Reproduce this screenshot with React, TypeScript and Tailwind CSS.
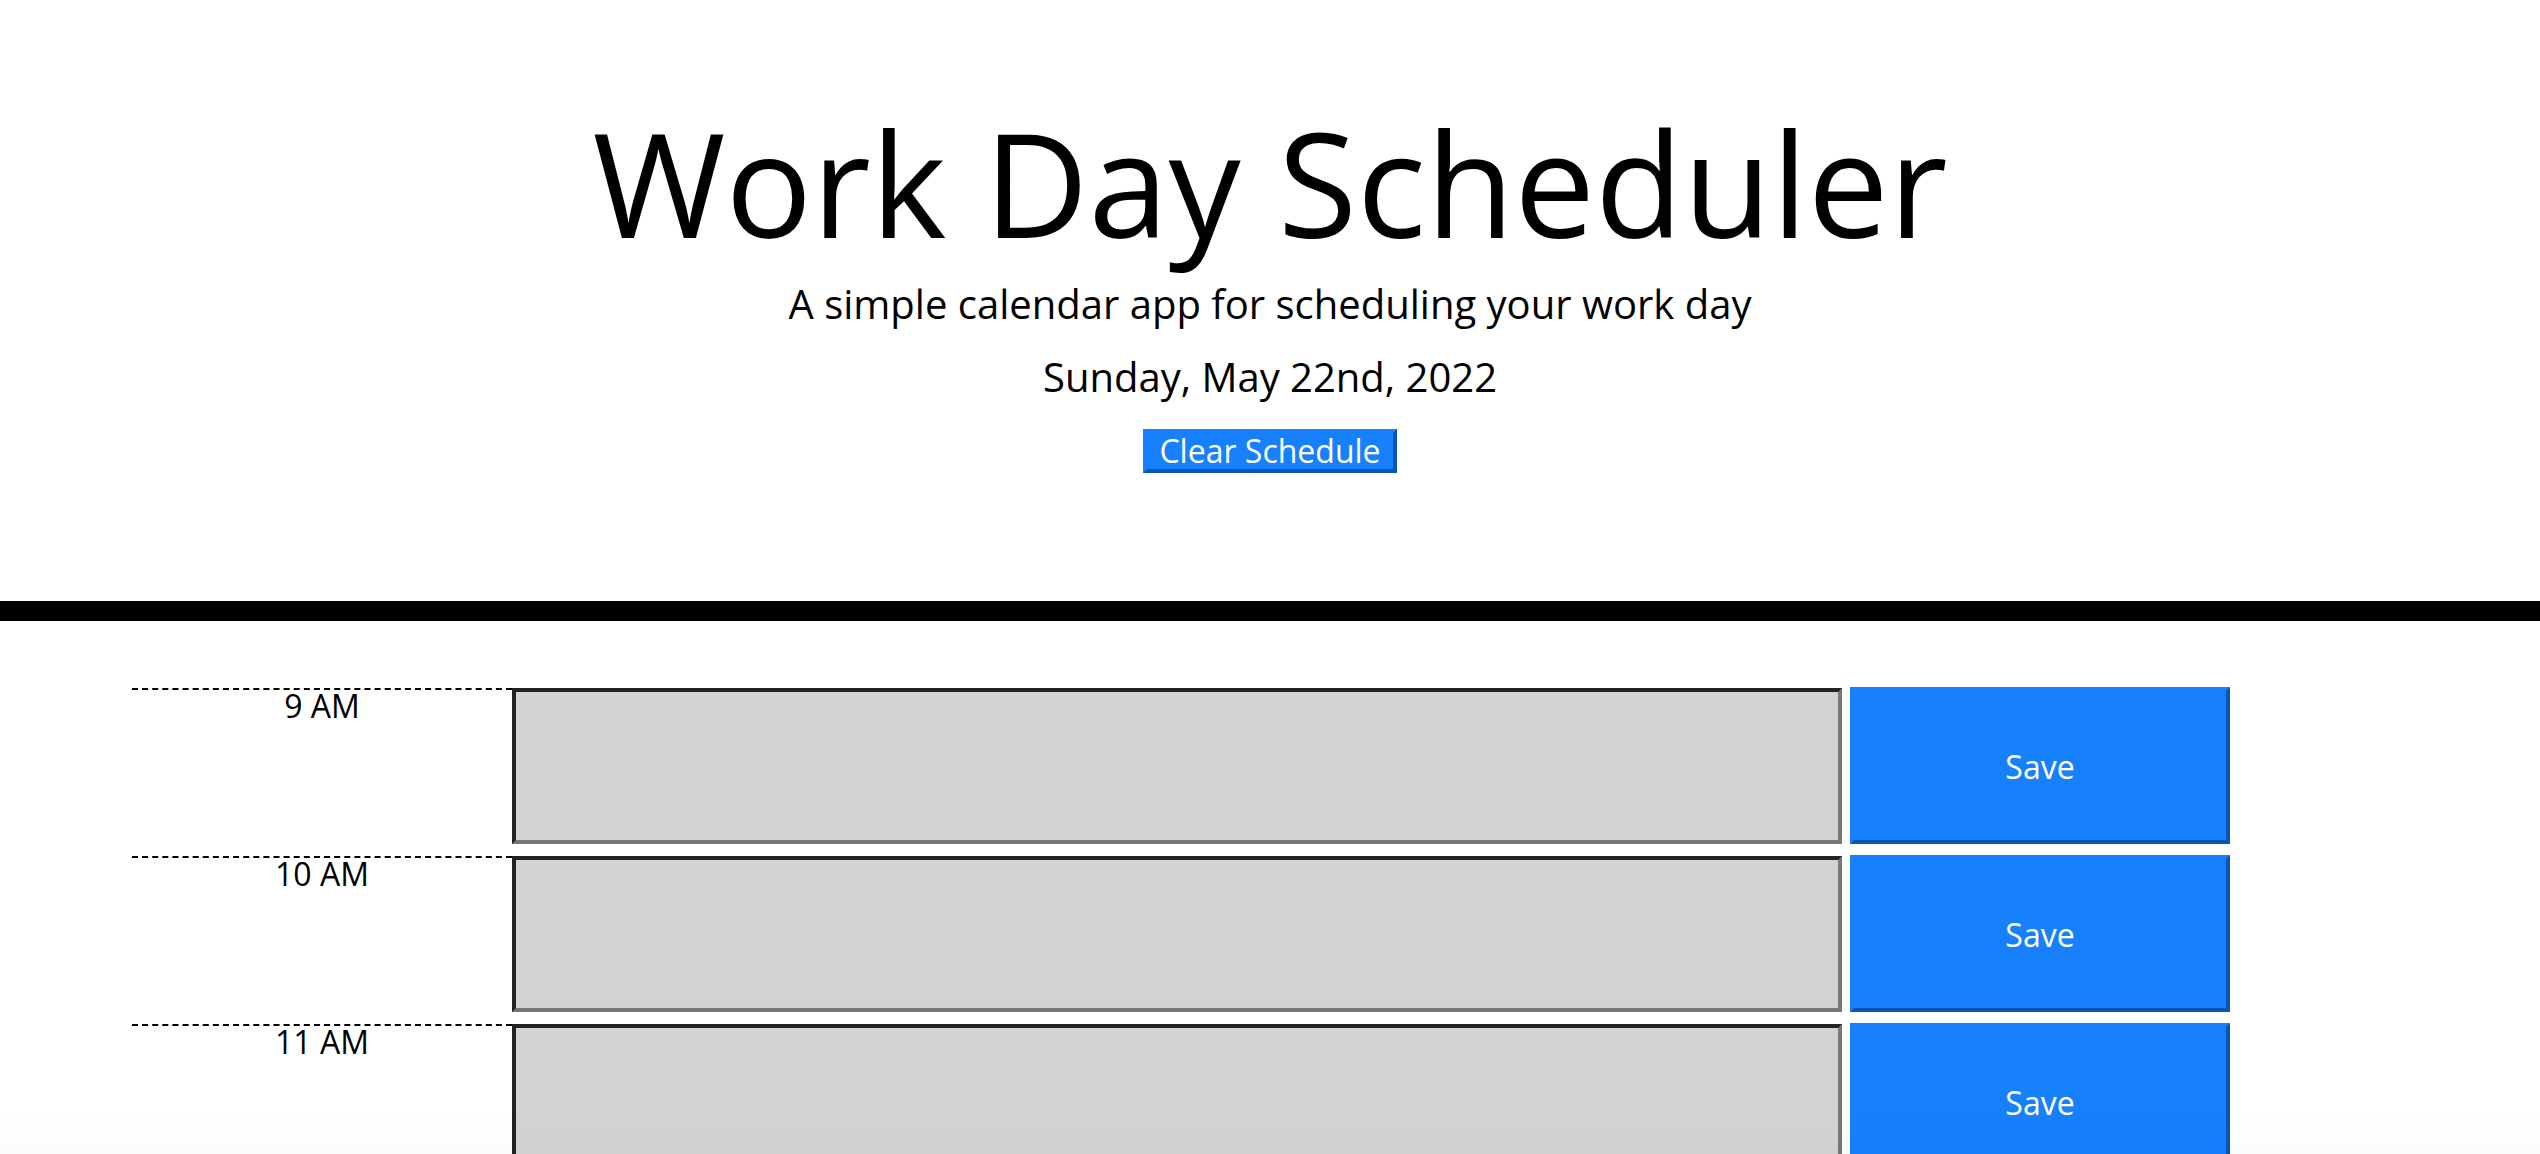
import type { ReactNode } from "react"

const hours = ["9 AM", "10 AM", "11 AM", "12 PM", "1 PM", "2 PM", "3 PM", "4 PM", "5 PM"]

function HourRow({ label }: { label: string }): ReactNode {
  return (
    <div className="flex h-[156px]">
      <div className="w-[380px] border-t-2 border-dashed border-black text-center text-[32px] leading-none">
        {label}
      </div>
      <textarea
        className="w-[1330px] resize-none border-4 border-t-[#222222] border-l-[#222222] border-r-[#777777] border-b-[#777777] bg-[#d3d3d3] outline-none"
        aria-label={label}
      />
      <button className="ml-2 -mt-px w-[380px] border-4 border-t-[#1780fb] border-l-[#1780fb] border-r-[#0b56b0] border-b-[#0b56b0] bg-[#1780fb] pt-[2px] text-[32px] leading-none text-white">
        Save
      </button>
    </div>
  )
}

export default function App() {
  return (
    <div className="min-h-screen bg-white font-['Open_Sans',sans-serif] text-black">
      <header className="flex flex-col items-center pt-[110px] pb-[128px]">
        <h1 className="text-[144px] font-normal leading-none">Work Day Scheduler</h1>
        <p className="mt-[30px] text-[40px] leading-none">A simple calendar app for scheduling your work day</p>
        <p className="mt-[33px] text-[40px] leading-none">Sunday, May 22nd, 2022</p>
        <button className="mt-[32px] h-[44px] w-[254px] border-4 border-t-[#1780fb] border-l-[#1780fb] border-r-[#0b56b0] border-b-[#0b56b0] bg-[#1780fb] text-[32px] leading-none text-white">
          Clear Schedule
        </button>
      </header>

      <div className="h-5 bg-black" />

      <main className="flex flex-col gap-3 pl-[132px] pt-[67px] pb-10">
        {hours.map((h) => (
          <HourRow key={h} label={h} />
        ))}
      </main>

      <div className="pointer-events-none fixed inset-x-0 bottom-0 h-[50px] bg-gradient-to-b from-transparent to-black/[0.012]" />
    </div>
  )
}
